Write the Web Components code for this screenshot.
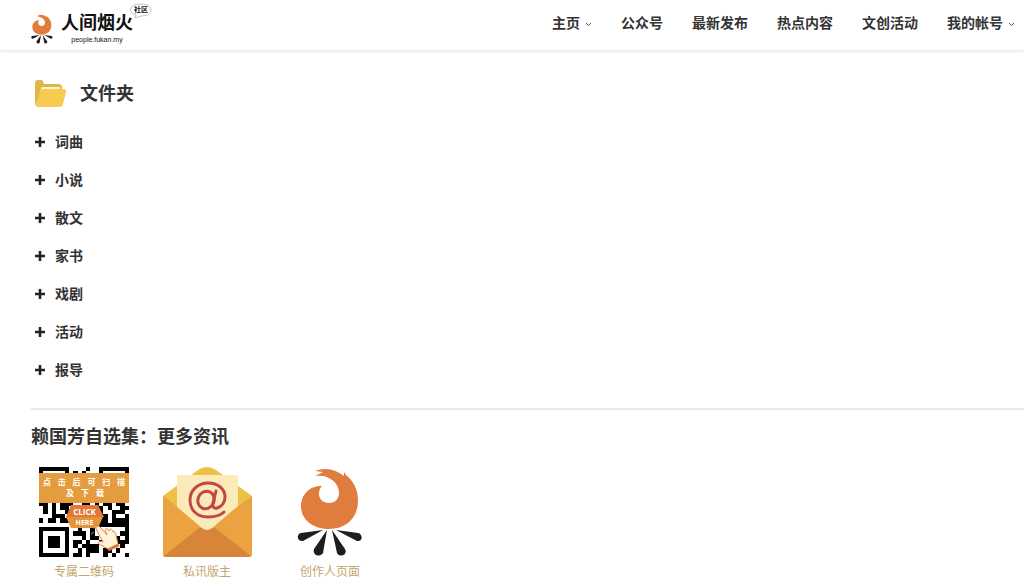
<!DOCTYPE html>
<html lang="zh-CN">
<head>
<meta charset="utf-8">
<meta name="viewport" content="width=device-width, initial-scale=1">
<title>人间烟火社区</title>
<style>
    body {
        margin: 0;
        background: #fff;
        color: #333;
        font-family: "Liberation Sans", "Noto Sans CJK SC", sans-serif;
        --ink: #333;
        --gold: #c3a56c;
        overflow-x: hidden;
    }
    main { padding: 27px 0 0 31px; }
</style>
</head>
<body>
<site-header>
    <nav-item href="#home" menu>主页</nav-item>
    <nav-item href="#accounts">公众号</nav-item>
    <nav-item href="#latest">最新发布</nav-item>
    <nav-item href="#hot">热点内容</nav-item>
    <nav-item href="#events">文创活动</nav-item>
    <nav-item href="#me" menu>我的帐号</nav-item>
</site-header>
<main>
    <folder-list heading="文件夹">
        <folder-item>词曲</folder-item>
        <folder-item>小说</folder-item>
        <folder-item>散文</folder-item>
        <folder-item>家书</folder-item>
        <folder-item>戏剧</folder-item>
        <folder-item>活动</folder-item>
        <folder-item>报导</folder-item>
    </folder-list>
    <more-info heading="赖国芳自选集：更多资讯">
        <info-link href="#qr" label="专属二维码"><qr-card></qr-card></info-link>
        <info-link href="#mail" label="私讯版主"><mail-icon></mail-icon></info-link>
        <info-link href="#author" label="创作人页面"><fire-icon></fire-icon></info-link>
    </more-info>
</main>

<script>
class FireIcon extends HTMLElement {
    connectedCallback() {
        this.attachShadow({ mode: 'open' });
        this.shadowRoot.innerHTML = `
            <style>
                :host { display: block; width: 100%; height: 100%; }
                svg { display: block; width: 100%; height: 100%; }
            </style>
            <svg viewBox="0 0 66 88" aria-hidden="true">
                <path fill="#e07c3e" d="M25 18C14 17 4 26 4 38C4 51 15 61 32 61C50 61 61 49 61 33C61 20 56 13 49 7L47 4L47 8C38 1 28-1 18 3L26 4L18 8C31 6 42 14 42 25C42 31 38 35 32 35C26 35 22 31 22 26C22 22 23 20 25 18Z"/>
                <g fill="#1d1d1b">
                    <path d="M26 62L4 65C-1 66 0 74 6 73Z"/>
                    <path d="M30 62L17 81C15 87 22 90 26 85Z"/>
                    <path d="M35 62L40 85C43 90 51 87 48 81Z"/>
                    <path d="M39 62L60 73C66 74 66 66 61 65Z"/>
                </g>
            </svg>
        `;
    }
}

class SiteHeader extends HTMLElement {
    connectedCallback() {
        this.attachShadow({ mode: 'open' });
        this.shadowRoot.innerHTML = `
            <style>
                :host {
                    display: flex;
                    justify-content: space-between;
                    align-items: flex-start;
                    height: 50px;
                    padding: 0 9px 0 31px;
                    background: #fff;
                    box-shadow: 0 1px 4px rgba(0, 0, 0, 0.12);
                }
                .logo {
                    position: relative;
                    display: flex;
                    gap: 8px;
                    padding-top: 13px;
                    color: #111;
                    text-decoration: none;
                }
                .mark { width: 22px; height: 32px; }
                .words { display: flex; flex-direction: column; align-items: center; }
                .name { font-size: 18px; line-height: 20px; font-weight: 700; }
                .site { font-size: 7px; line-height: 10px; margin-top: 2px; }
                .bubble { position: absolute; left: 98px; top: 3px; width: 24px; height: 16px; }
                .bubble svg { position: absolute; inset: 0; }
                .bubble span {
                    position: relative;
                    display: block;
                    font-size: 7px;
                    line-height: 14px;
                    font-weight: 700;
                    text-align: center;
                }
                nav { display: flex; gap: 29px; padding-top: 12px; }
            </style>
            <a class="logo" href="#home">
                <fire-icon class="mark"></fire-icon>
                <span class="words">
                    <span class="name">人间烟火</span>
                    <span class="site">people.fukan.my</span>
                </span>
                <span class="bubble">
                    <svg width="24" height="16" viewBox="0 0 24 16" fill="#fff" stroke="#999" stroke-width=".6" aria-hidden="true">
                        <path d="M7 12C-2 10 0 1 12 1C25 1 26 13 12 13L6 15Z"/>
                    </svg>
                    <span>社区</span>
                </span>
            </a>
            <nav aria-label="主导航"><slot></slot></nav>
        `;
    }
}

class NavItem extends HTMLElement {
    connectedCallback() {
        const caret = this.hasAttribute('menu')
            ? '<svg width="7" height="5" viewBox="0 0 7 5" fill="none" stroke="#555" aria-hidden="true"><path d="M1 1L3.500 3.500L6 1"/></svg>'
            : '';
        this.attachShadow({ mode: 'open' });
        this.shadowRoot.innerHTML = `
            <style>
                :host { display: block; }
                a {
                    display: flex;
                    align-items: center;
                    gap: 5px;
                    color: var(--ink);
                    font-size: 14px;
                    line-height: 22px;
                    font-weight: 700;
                    text-decoration: none;
                    white-space: nowrap;
                }
                svg { margin-top: 2px; }
            </style>
            <a href="${this.getAttribute('href')}"><slot></slot>${caret}</a>
        `;
    }
}

class FolderList extends HTMLElement {
    connectedCallback() {
        this.attachShadow({ mode: 'open' });
        this.shadowRoot.innerHTML = `
            <style>
                :host { display: block; padding-bottom: 19px; border-bottom: 2px solid #e8e8e8; }
                header { display: flex; align-items: center; gap: 14px; padding-left: 4px; }
                h2 { margin: 0; font-size: 18px; line-height: 34px; font-weight: 700; }
                .items { display: flex; flex-direction: column; padding-top: 12px; }
            </style>
            <header>
                <svg width="31" height="28" viewBox="0 0 31 28" aria-hidden="true">
                    <path fill="#dfb64a" d="M0 4Q0 0 3 0H6Q8 0 9 4H24Q27 4 27 8V20L2 26Q0 25 0 22Z"/>
                    <path fill="#fff3cf" d="M7 7H25V12H5Z"/>
                    <path fill="#f7ca50" d="M8 9H29Q31 9 31 12L28 24Q27 27 24 27H3Q0 27 1 23L5 12Q6 9 8 9Z"/>
                </svg>
                <h2>${this.getAttribute('heading')}</h2>
            </header>
            <div class="items"><slot></slot></div>
        `;
    }
}

class FolderItem extends HTMLElement {
    connectedCallback() {
        this.attachShadow({ mode: 'open' });
        this.shadowRoot.innerHTML = `
            <style>
                :host { display: block; }
                button {
                    display: flex;
                    align-items: center;
                    gap: 10px;
                    height: 38px;
                    padding: 0 4px;
                    border: 0;
                    background: none;
                    color: inherit;
                    font: 700 14px/20px "Liberation Sans", "Noto Sans CJK SC", sans-serif;
                }
            </style>
            <button type="button" aria-expanded="false">
                <svg width="10" height="10" viewBox="0 0 10 10" stroke="#222" stroke-width="2.600" aria-hidden="true"><path d="M5 0V10M0 5H10"/></svg>
                <slot></slot>
            </button>
        `;
    }
}

class MoreInfo extends HTMLElement {
    connectedCallback() {
        this.attachShadow({ mode: 'open' });
        this.shadowRoot.innerHTML = `
            <style>
                :host { display: block; padding-top: 13px; }
                h2 { margin: 0; font-size: 18px; line-height: 28px; font-weight: 700; }
                .links { display: flex; flex-wrap: wrap; gap: 17px; padding-top: 16px; }
            </style>
            <h2>${this.getAttribute('heading')}</h2>
            <div class="links"><slot></slot></div>
        `;
    }
}

class InfoLink extends HTMLElement {
    connectedCallback() {
        this.attachShadow({ mode: 'open' });
        this.shadowRoot.innerHTML = `
            <style>
                :host { display: block; width: 106px; }
                a {
                    display: flex;
                    flex-direction: column;
                    align-items: center;
                    gap: 6px;
                    color: var(--gold);
                    font-size: 12px;
                    line-height: 18px;
                    text-decoration: none;
                }
                .picture { width: 90px; height: 90px; }
                ::slotted(fire-icon) { box-sizing: border-box; padding: 1px; }
            </style>
            <a href="${this.getAttribute('href')}">
                <span class="picture"><slot></slot></span>
                <span>${this.getAttribute('label')}</span>
            </a>
        `;
    }
}

const QR_ROWS = [
    '111111100001001111111',
    '100000101010001000001',
    '101110100010101011101',
    '101110101100101011101',
    '101110100101001011101',
    '100000101010101000001',
    '111111101010101111111',
    '000000000110000000000',
    '110101110011010110110',
    '010101100011011010011',
    '010100111100101001110',
    '000111011010101101001',
    '101101110111001101111',
    '000000001011111111111',
    '111111100100100000001',
    '100000101110101000011',
    '101110100010110000101',
    '101110101101001000111',
    '101110101011110001010',
    '100000100101110110100',
    '111111101101000101001'
];

class QrCard extends HTMLElement {
    connectedCallback() {
        let cells = '';
        QR_ROWS.forEach((row, y) => {
            [...row].forEach((bit, x) => {
                if (bit === '1') cells += `M${x} ${y}h1v1h-1z`;
            });
        });
        this.attachShadow({ mode: 'open' });
        this.shadowRoot.innerHTML = `
            <style>
                :host { display: block; position: relative; width: 90px; height: 90px; }
                svg { display: block; }
                .band, .click, .art { position: absolute; }
                .band {
                    inset: 6px 0 auto;
                    height: 30px;
                    background: #e59c3f;
                    color: #fff;
                    font-size: 8px;
                    line-height: 11px;
                    display: flex;
                    flex-direction: column;
                    justify-content: center;
                }
                .band span { display: flex; justify-content: space-between; padding: 0 4px; }
                .band span + span { padding: 0 25px 0 27px; }
                .art { inset: 0; }
                .click {
                    inset: 39px 26px auto 27px;
                    color: #fff;
                    text-align: center;
                    font: 700 7px/11px "Open Sans", sans-serif;
                }
                .click span { display: block; }
                .click .big { font-size: 8px; }
            </style>
            <svg width="90" height="90" viewBox="0 0 21 21" shape-rendering="crispEdges" aria-hidden="true"><path d="${cells}"/></svg>
            <div class="band">
                <span><b>点</b><b>击</b><b>后</b><b>可</b><b>扫</b><b>描</b></span>
                <span><b>及</b><b>下</b><b>载</b></span>
            </div>
            <svg class="art" width="90" height="90" viewBox="0 0 90 90" aria-hidden="true">
                <path fill="#e2773a" d="M32 38H59L65 50H27Z"/>
                <path fill="#e59538" d="M27 50H64L59 61H32Z"/>
                <path fill="#fff3dc" stroke="#e2874a" stroke-width="1" d="M57 62C56 59 60 58 62 61L68 68L66 63C67 61 69 61 70 64C71 61 74 62 74 65C76 64 77 66 77 68L79 77L69 82L60 77C58 75 60 73 64 75Z"/>
                <path stroke="#e2773a" stroke-width="3" d="M69 83L80 78"/>
                <path stroke="#e2874a" stroke-width="1" d="M56 61L52 60M58 59L57 55M55 65L52 67"/>
            </svg>
            <div class="click"><span class="big">CLICK</span><span>HERE</span></div>
        `;
    }
}

class MailIcon extends HTMLElement {
    connectedCallback() {
        this.attachShadow({ mode: 'open' });
        this.shadowRoot.innerHTML = `
            <style>
                :host { display: block; }
                svg { display: block; }
            </style>
            <svg width="90" height="90" viewBox="0 0 90 90" aria-hidden="true">
                <path fill="#edc145" d="M1 29L36 3Q45-3 54 3L90 29L80 50H10Z"/>
                <path fill="#eaa340" d="M1 29L45 62L90 29V87Q90 90 87 90H3Q1 90 1 87Z"/>
                <path fill="#d98539" d="M2 89L37 61H53L89 89L87 90H3Z"/>
                <path fill="#faebb8" d="M15 8H76V39L50 61Q45 65 40 61L15 40Z"/>
                <g fill="none" stroke="#c34747" stroke-linecap="round">
                    <ellipse cx="44" cy="33" rx="8" ry="9" stroke-width="3" transform="rotate(25 44 33)"/>
                    <path stroke-width="3" d="M54 24L51 36Q50 42 55 41C60 40 63 35 63 30C63 22 56 16 46 16C35 16 28 24 28 33C28 43 35 50 46 50C53 50 58 49 62 45"/>
                </g>
            </svg>
        `;
    }
}

customElements.define('fire-icon', FireIcon);
customElements.define('site-header', SiteHeader);
customElements.define('nav-item', NavItem);
customElements.define('folder-list', FolderList);
customElements.define('folder-item', FolderItem);
customElements.define('more-info', MoreInfo);
customElements.define('info-link', InfoLink);
customElements.define('qr-card', QrCard);
customElements.define('mail-icon', MailIcon);
</script>
</body>
</html>
